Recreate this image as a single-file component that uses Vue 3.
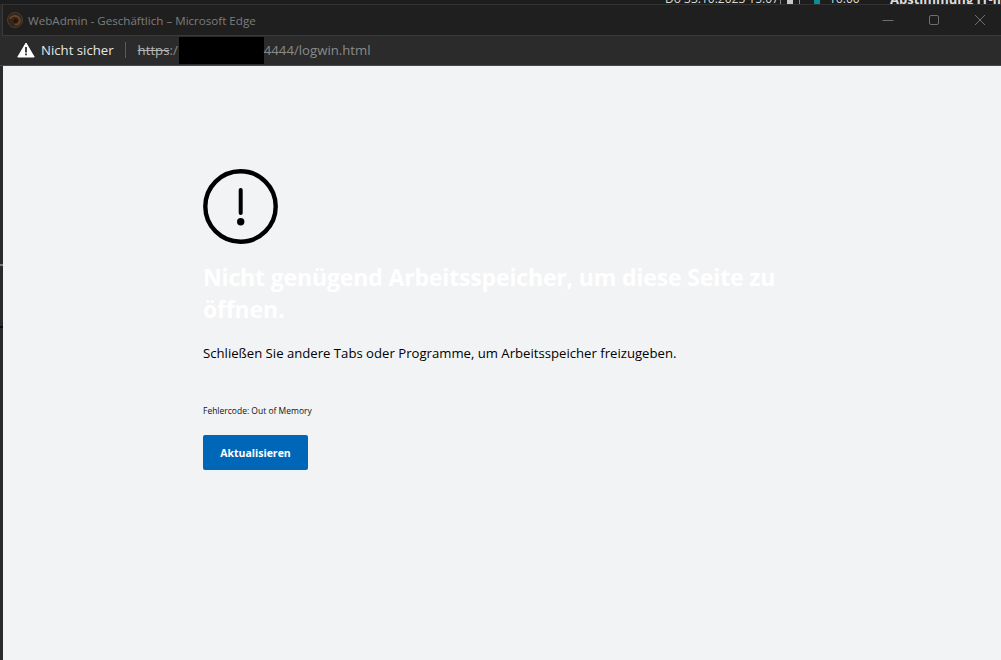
<script setup>
const title = 'WebAdmin - Geschäftlich – Microsoft Edge'
</script>

<template>
  <div class="window">
    <div class="strip">
      <span class="strip-date">Do 33.10.2023 15:07</span>
      <span class="strip-sep"><b></b><i></i><b></b></span>
      <span class="strip-teal"></span>
      <span class="strip-time">16:00</span>
      <span class="strip-subject">Abstimmung IT-In</span>
    </div>
    <header class="titlebar">
      <svg class="favicon" width="18" height="18" viewBox="0 0 18 18">
        <circle cx="9" cy="9" r="7.500" fill="#33261f" stroke="#4f3b2d" />
        <path d="M4 8c1-3 5-4 8-2 2 1 2.500 4 1 6-1 1.500-3 2-4 1" fill="none" stroke="#6e4523" stroke-width="1.800" />
        <circle cx="9.500" cy="10" r="2" fill="#20140e" />
      </svg>
      <span class="title">{{ title }}</span>
      <div class="controls">
        <svg width="12" height="12" viewBox="0 0 12 12"><path d="M.5 6.500h11" stroke="#6f6f6f" /></svg>
        <svg width="12" height="12" viewBox="0 0 12 12"><rect x="1.500" y="1.500" width="9" height="9" rx="1.500" fill="none" stroke="#6f6f6f" /></svg>
        <svg width="12" height="12" viewBox="0 0 12 12"><path d="M1 1l10 10M11 1L1 11" stroke="#6f6f6f" /></svg>
      </div>
    </header>
    <div class="addressbar">
      <svg class="warn" width="18" height="16" viewBox="0 0 18 16">
        <path d="M9 1 17.200 15H.8z" fill="#fff" stroke="#fff" stroke-linejoin="round" />
        <path d="M8.100 5h1.800v5.500H8.100zM8.100 11.500h1.800v1.800H8.100z" fill="#2b2b2b" />
      </svg>
      <span class="insecure">Nicht sicher</span>
      <span class="divider"></span>
      <span class="url"><s>https</s>:/<span class="redact"></span>4444/logwin.html</span>
    </div>
    <div class="lower">
      <div class="rail">
        <span class="rail-light"></span>
        <span class="rail-dark"></span>
      </div>
      <main class="page">
        <div class="content">
          <svg class="bigicon" width="75" height="75" viewBox="0 0 75 75">
            <circle cx="37.500" cy="37.500" r="35.200" fill="none" stroke="#000" stroke-width="4.400" />
            <path d="M37.700 21v23" stroke="#000" stroke-width="4" stroke-linecap="round" />
            <circle cx="37.700" cy="52.700" r="3.700" fill="#000" />
          </svg>
          <h1>Nicht genügend Arbeitsspeicher, um diese Seite zu öffnen.</h1>
          <p class="body">Schließen Sie andere Tabs oder Programme, um Arbeitsspeicher freizugeben.</p>
          <p class="code">Fehlercode: Out of Memory</p>
          <button class="reload">Aktualisieren</button>
        </div>
      </main>
    </div>
  </div>
</template>

<style>
html, body { margin: 0; background: #f2f3f5; overflow: hidden; }
</style>

<style scoped>
.window {
  width: 1001px;
  height: 660px;
  display: flex;
  flex-direction: column;
  background: #2a2a2a;
  font-family: "Open Sans", "Noto Sans", sans-serif;
  overflow: hidden;
}
.strip {
  height: 4px;
  flex: none;
  background: #1d1d1d;
  overflow: hidden;
  display: flex;
  align-items: flex-end;
  padding-left: 665px;
  color: #dcdcdc;
  font-size: 12px;
  line-height: 4px;
}
.strip > span { flex: none; }
.strip-date { width: 115px; white-space: nowrap; transform: translateY(-3px); }
.strip-sep { width: 34px; height: 4px; display: flex; gap: 6px; }
.strip-sep b { width: 1px; height: 4px; background: #8a8a8a; }
.strip-sep i { width: 6px; height: 4px; background: #c8c8c8; }
.strip-teal { width: 6px; height: 4px; background: #0a8f96; margin-right: 9px; }
.strip-time { width: 61px; transform: translateY(-3px); }
.strip-subject { font-weight: 700; font-size: 13px; white-space: nowrap; transform: translateY(-3px); }
.titlebar {
  height: 30px;
  flex: none;
  display: flex;
  align-items: center;
  background: #1f1f1f;
  border-top: 1px solid #333;
  border-bottom: 1px solid #3a3a3a;
  margin-left: 2px;
  border-left: 1px solid #3a3a3a;
  padding-left: 3px;
}
.favicon { margin-right: 4px; }
.title { font-size: 11.600px; color: #7d7d7d; white-space: nowrap; }
.controls {
  margin-left: auto;
  display: flex;
  gap: 34px;
  padding-right: 15px;
}
.addressbar {
  height: 27px;
  flex: none;
  display: flex;
  align-items: center;
  background: #2b2b2b;
  border-bottom: 1px solid #4a4a4a;
  padding: 0 0 2px 17px;
}
.warn { margin-right: 6px; }
.insecure { font-size: 13.200px; color: #e6e6e6; white-space: nowrap; }
.divider { width: 1px; height: 16px; background: #5a5a5a; margin: 0 12px 0 11px; }
.url { display: flex; align-items: center; font-size: 13.200px; color: #8a8a8a; white-space: nowrap; }
.url s { color: #b5b5b5; }
.redact { width: 85px; height: 27px; background: #000; margin: 1px 0 0 1px; }
.lower { flex: 1; display: flex; min-height: 0; }
.rail {
  width: 3px;
  flex: none;
  display: flex;
  flex-direction: column;
  padding-top: 198px;
  background: #2a2a2a;
}
.rail-light { height: 2px; background: #7c7c7c; }
.rail-dark { height: 2px; margin-top: 60px; background: #0c0c0c; }
.page {
  flex: 1;
  background: #f2f3f5;
  padding: 103px 0 0 200px;
}
.content { width: 600px; }
.bigicon { display: block; margin-bottom: 17px; }
h1 {
  margin: 0;
  font-size: 23px;
  line-height: 32px;
  letter-spacing: -0.150px;
  font-weight: 700;
  color: #fff;
}
.body { margin: 19px 0 0; font-size: 13.150px; line-height: 18px; color: #000; }
.code { margin: 43px 0 0; font-size: 8.500px; line-height: 12px; color: #111; }
.reload {
  display: block;
  margin-top: 18px;
  width: 105px;
  height: 35px;
  border: 0;
  border-radius: 2px;
  background: #0067b8;
  color: #fff;
  font: 700 10.500px "Open Sans", sans-serif;
}
</style>
